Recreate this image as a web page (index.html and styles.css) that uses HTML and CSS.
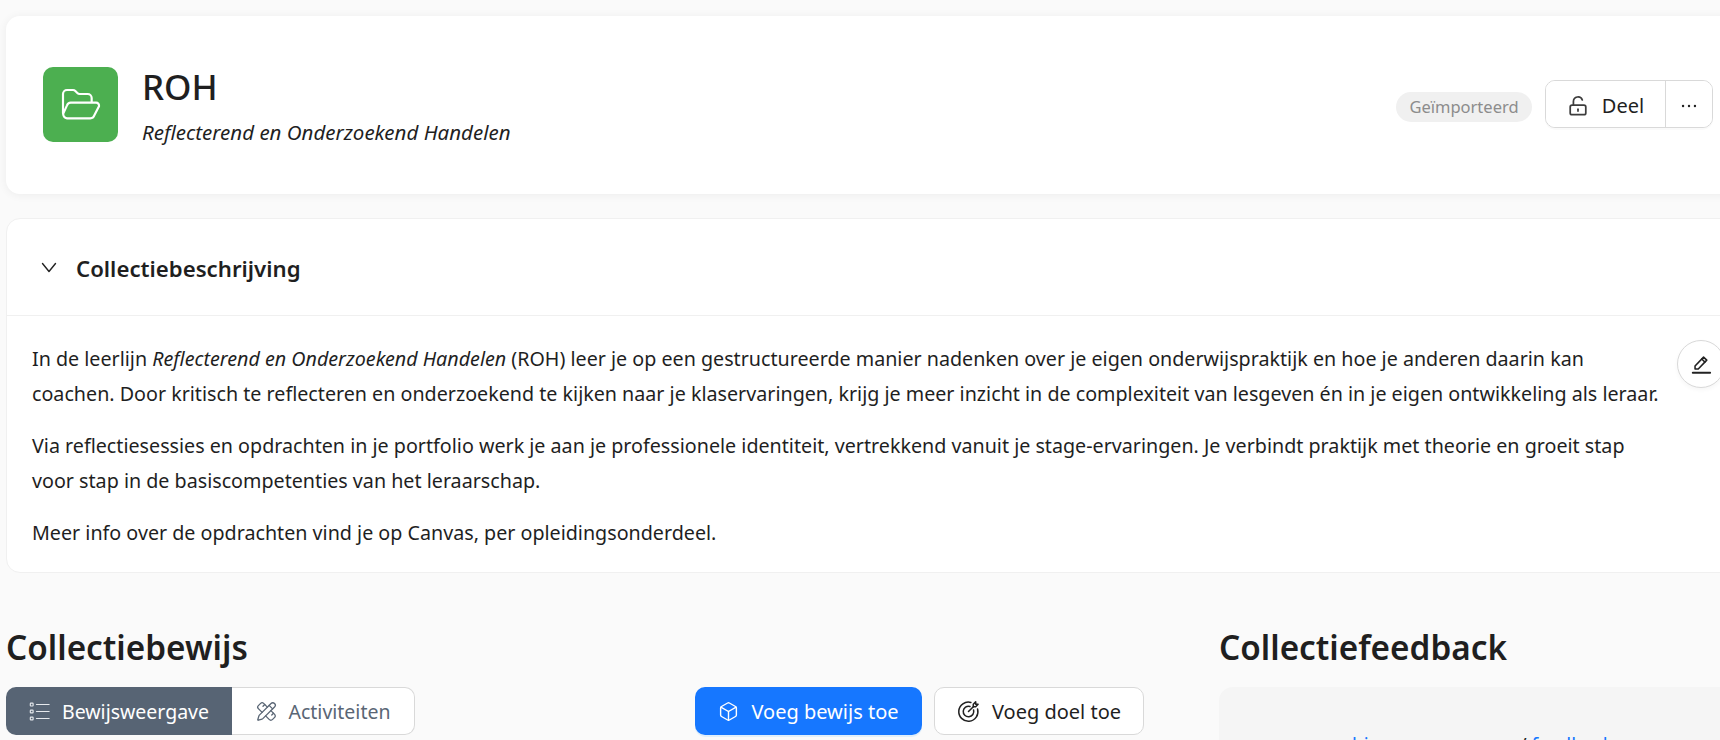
FILE: index.html
```html
<!DOCTYPE html>
<html lang="nl">
<head>
<meta charset="utf-8">
<title>ROH</title>
<link rel="stylesheet" href="styles.css">
</head>
<body>
<main class="page">
  <section class="head-card">
    <div class="head-left">
      <div class="folder-tile">
        <svg class="folder-icon" viewBox="0 0 150 135" fill="none" stroke="#fff" stroke-width="6.500" stroke-linecap="round" stroke-linejoin="round"><path d="M24 100V42a12 12 0 0 1 12-12H54a10 10 0 0 1 7 3l6 6a10 10 0 0 0 7 3H98a12 12 0 0 1 12 12V66"/><path d="M47 68H123a9 9 0 0 1 9 11L118 106a14 14 0 0 1-12 9H36a12 12 0 0 1-11-15L36 76a12 12 0 0 1 11-8Z"/></svg>
      </div>
      <div class="head-text">
        <h1>ROH</h1>
        <p>Reflecterend en Onderzoekend Handelen</p>
      </div>
    </div>
    <div class="head-right">
      <span class="badge">Geïmporteerd</span>
      <div class="share-group">
        <button class="share-btn">
          <svg class="ic22" viewBox="0 0 24 24" fill="none" stroke="#3d3d3d" stroke-width="1.900" stroke-linecap="round" stroke-linejoin="round"><path d="M7 11V7a5 5 0 0 1 9.700-1.600"/><rect x="3.500" y="11" width="17" height="10.500" rx="2"/><path d="M12 15.500v2"/></svg>
          Deel
        </button>
        <button class="more-btn" aria-label="Meer">
          <svg class="ic22" viewBox="0 0 24 24" fill="#222"><circle cx="5.500" cy="12" r="1.300"/><circle cx="12" cy="12" r="1.300"/><circle cx="18.500" cy="12" r="1.300"/></svg>
        </button>
      </div>
    </div>
  </section>

  <section class="desc-card">
    <header class="desc-head">
      <svg class="chev" viewBox="0 0 16 16" fill="none" stroke="#222" stroke-width="1.400" stroke-linecap="round" stroke-linejoin="round"><path d="M1.500 4.500l6.500 8 6.500-8"/></svg>
      <h2>Collectiebeschrijving</h2>
    </header>
    <div class="desc-body">
      <p>In de leerlijn <em>Reflecterend en Onderzoekend Handelen</em> (ROH) leer je op een gestructureerde manier nadenken over je eigen onderwijspraktijk en hoe je anderen daarin kan<br>coachen. Door kritisch te reflecteren en onderzoekend te kijken naar je klaservaringen, krijg je meer inzicht in de complexiteit van lesgeven én in je eigen ontwikkeling als leraar.</p>
      <p>Via reflectiesessies en opdrachten in je portfolio werk je aan je professionele identiteit, vertrekkend vanuit je stage-ervaringen. Je verbindt praktijk met theorie en groeit stap<br>voor stap in de basiscompetenties van het leraarschap.</p>
      <p>Meer info over de opdrachten vind je op Canvas, per opleidingsonderdeel.</p>
      <button class="edit-btn" aria-label="Bewerk">
        <svg viewBox="0 0 24 24" fill="none" stroke="#222" stroke-linejoin="round" stroke-linecap="round"><path stroke-width="1.700" d="M5.500 17.500v-3.300L14.800 4.500l3.500 3.300-9.300 9.700H5.500Z"/><path stroke-width="1.700" d="M12.800 6.600l3.500 3.300"/><path stroke-width="2" d="M3 21.500h19"/></svg>
      </button>
    </div>
  </section>

  <div class="columns">
    <section class="evidence">
      <h2 class="col-title">Collectiebewijs</h2>
      <div class="toolbar">
        <div class="tabs">
          <button class="tab tab-on">
            <svg class="ic21" viewBox="0 0 24 24" fill="none" stroke="#e6e9ed" stroke-width="1.300" stroke-linecap="round"><path d="M8.500 4h14.500M8.500 12h14.500M8.500 20h14.500"/><rect x="1.500" y="2.500" width="3.200" height="3.200" rx=".6"/><rect x="1.500" y="10.400" width="3.200" height="3.200" rx=".6"/><rect x="1.500" y="18.400" width="3.200" height="3.200" rx=".6"/></svg>
            Bewijsweergave
          </button>
          <button class="tab tab-off">
            <svg class="ic21" viewBox="0 0 24 24" fill="none" stroke="#5a6675" stroke-width="1.500" stroke-linecap="round" stroke-linejoin="round"><path d="M13 7 8.700 2.700a2.410 2.410 0 0 0-3.400 0L2.700 5.300a2.410 2.410 0 0 0 0 3.400L7 13"/><path d="m8 6 2-2"/><path d="m18 16 2-2"/><path d="m17 11 4.300 4.300c.94.94.94 2.460 0 3.400l-2.600 2.600c-.94.94-2.460.94-3.400 0L11 17"/><path d="M21.174 6.812a1 1 0 0 0-3.986-3.987L3.842 16.174a2 2 0 0 0-.5.83l-1.321 4.352a.5.5 0 0 0 .623.622l4.353-1.320a2 2 0 0 0 .83-.497z"/><path d="m15 5 4 4"/></svg>
            Activiteiten
          </button>
        </div>
        <div class="actions">
          <button class="action action-primary">
            <svg class="ic21" viewBox="0 0 24 24" fill="none" stroke="#fff" stroke-width="1.600" stroke-linejoin="round" stroke-linecap="round"><path d="M21 8a2 2 0 0 0-1-1.730l-7-4a2 2 0 0 0-2 0l-7 4A2 2 0 0 0 3 8v8a2 2 0 0 0 1 1.730l7 4a2 2 0 0 0 2 0l7-4A2 2 0 0 0 21 16Z"/><path d="m3.300 7 8.700 5 8.700-5"/><path d="M12 22V12"/></svg>
            Voeg bewijs toe
          </button>
          <button class="action">
            <svg class="ic23" viewBox="0 0 24 24" fill="none" stroke="#222" stroke-width="1.600" stroke-linecap="round" stroke-linejoin="round"><path d="M14.500 2.500A10 10 0 1 0 21.500 9.500"/><path d="M13.500 6.700A5.500 5.500 0 1 0 17.300 10.500"/><path d="M12 12l5-5"/><path d="M17 7V4.500L19.500 2v2.500H22L19.500 7H17Z"/></svg>
            Voeg doel toe
          </button>
        </div>
      </div>
    </section>
    <section class="feedback">
      <h2 class="col-title">Collectiefeedback</h2>
      <div class="feedback-box">
        <p><a href="#">hier een vraag om</a> / <a href="#">feedback</a></p>
      </div>
    </section>
  </div>
</main>
</body>
</html>
```
FILE: styles.css
```css
* { box-sizing: border-box; }
html, body { margin: 0; height: 740px; overflow: hidden; }
body {
  background: #fafafa;
  color: #1f1f1f;
  font-family: "Noto Sans", "Open Sans", sans-serif;
  font-size: 20px;
  width: 1720px;
}
.page { width: 1748px; padding: 16px 0 0 6px; }
button { font: inherit; color: inherit; background: #fff; }

.head-card {
  height: 178px;
  background: #fff;
  border-radius: 14px;
  box-shadow: 0 1px 10px rgba(0,0,0,.06);
  display: flex;
  align-items: center;
  justify-content: space-between;
  padding: 0 35px 0 37px;
}
.head-left { display: flex; align-items: center; gap: 24px; }
.folder-tile {
  width: 75px; height: 75px;
  background: #4caf50;
  border-radius: 10px;
  margin-top: -1px;
  display: flex; align-items: center; justify-content: center;
}
.folder-icon { width: 50px; height: 45px; margin: 0 2px 4px 0; }
.head-text { margin-top: -1px; }
.head-text h1 { margin: 0; font-size: 35px; font-weight: 500; line-height: 44px; }
.head-text p { margin: 10px 0 0; font-size: 20.500px; font-style: italic; line-height: 26px; }
.head-right { display: flex; align-items: center; gap: 13px; }
.badge {
  width: 136px; height: 30px; line-height: 30px; text-align: center;
  background: #f0f0f0; border-radius: 15px;
  color: #8c8c8c; font-size: 16.500px;
  margin-top: 4px;
}
.share-group {
  display: flex; height: 48px;
  margin-top: -3px;
  background: #fff;
  border: 1px solid #d9d9d9; border-radius: 10px;
  box-shadow: 0 2px 0 rgba(0,0,0,.02);
  overflow: hidden;
}
.share-btn, .more-btn { border: 0; display: flex; align-items: center; justify-content: center; padding: 4px 0 0; }
.share-btn { width: 120px; gap: 13px; font-size: 20px; border-right: 1px solid #d9d9d9; }
.more-btn { width: 46px; }
.ic21 { width: 21px; height: 21px; flex: none; }
.ic22 { width: 22px; height: 22px; flex: none; }
.ic23 { width: 23px; height: 23px; flex: none; }

.desc-card {
  margin-top: 24px;
  background: #fff;
  border: 1px solid #f0f0f0;
  border-radius: 14px;
  height: 355px;
}
.desc-head {
  height: 97px;
  border-bottom: 1px solid #f0f0f0;
  display: flex; align-items: center; gap: 19px;
  padding: 3px 0 0 34px;
}
.chev { width: 16px; height: 16px; margin-top: -3px; }
.desc-head h2 { margin: 0; font-size: 22.200px; font-weight: 600; }
.desc-body { position: relative; padding: 25px 0 0 25px; width: 1660px; }
.desc-body p { margin: 0 0 17px; line-height: 35px; font-size: 19.700px; }
.edit-btn {
  position: absolute; top: 24px; right: -58px;
  width: 48px; height: 48px; border-radius: 50%;
  border: 1px solid #d9d9d9; padding: 0;
  display: flex; align-items: center; justify-content: center;
  box-shadow: 0 2px 4px rgba(0,0,0,.04);
}
.edit-btn svg { width: 22px; height: 22px; }

.columns { display: flex; gap: 75px; margin-top: 52px; }
.evidence { width: 1138px; flex: none; }
.feedback { flex: 1; }
.col-title { margin: 0; font-size: 33.300px; font-weight: 600; line-height: 44px; }
.toolbar { display: flex; justify-content: space-between; margin-top: 18px; }
.tabs { display: flex; height: 48px; }
.tab { display: flex; align-items: center; justify-content: center; gap: 12px; padding: 0; font-size: 19.500px; height: 48px; }
.tab-on { width: 226px; background: #576474; color: #fff; border: 0; border-radius: 10px 0 0 10px; }
.tab-off { width: 183px; color: #5a6675; border: 1px solid #d9d9d9; border-left: 0; border-radius: 0 10px 10px 0; }
.actions { display: flex; gap: 12px; }
.action {
  height: 48px; border: 1px solid #d9d9d9; border-radius: 10px;
  display: flex; align-items: center; justify-content: center; gap: 12px;
  font-size: 20px; padding: 0; width: 210px;
}
.action-primary { width: 227px; background: #1677ff; border: 0; color: #fff; box-shadow: 0 2px 0 rgba(5,145,255,.1); }
.feedback-box {
  margin-top: 18px; height: 200px;
  background: #f5f5f5; border-radius: 14px;
  padding-top: 44px;
  padding-left: 133px;
}
.feedback-box p { margin: 0; font-size: 19px; line-height: 28px; white-space: nowrap; }
.feedback-box a { color: #1677ff; text-decoration: none; }
```
